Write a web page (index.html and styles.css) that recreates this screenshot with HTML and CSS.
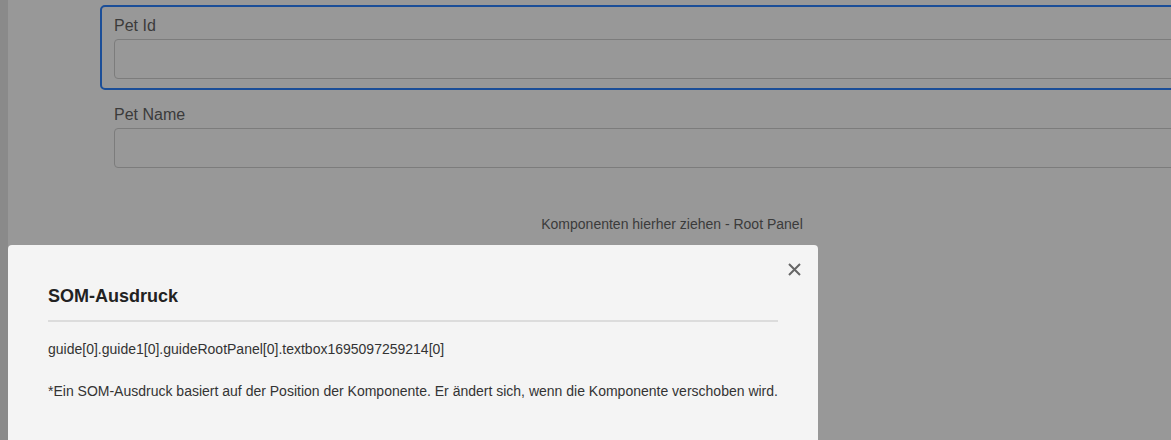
FILE: index.html
```html
<!DOCTYPE html>
<html lang="de">
<head>
<meta charset="utf-8">
<title>SOM-Ausdruck</title>
<link rel="stylesheet" href="styles.css">
</head>
<body>
<div class="app">
  <div class="strip"></div>
  <div class="canvas">
    <div class="field selected">
      <div class="label">Pet Id</div>
      <div class="input"></div>
    </div>
    <div class="field">
      <div class="label">Pet Name</div>
      <div class="input"></div>
    </div>
    <div class="dropzone">Komponenten hierher ziehen - Root Panel</div>
  </div>
</div>
<div class="modal">
  <button class="close" aria-label="Schließen">
    <svg width="13" height="13" viewBox="0 0 13 13"><path d="M1 1 L12 12 M12 1 L1 12" stroke="#666" stroke-width="2" fill="none"/></svg>
  </button>
  <h2 class="title">SOM-Ausdruck</h2>
  <div class="sep"></div>
  <p class="expr">guide[0].guide1[0].guideRootPanel[0].textbox1695097259214[0]</p>
  <p class="note">*Ein SOM-Ausdruck basiert auf der Position der Komponente. Er ändert sich, wenn die Komponente verschoben wird.</p>
</div>
</body>
</html>
```
FILE: styles.css
```css
html, body {
  margin: 0;
  height: 100%;
  overflow: hidden;
}
body {
  background: #989898;
  font-family: "Liberation Sans", Arial, sans-serif;
  color: #3b3b3b;
}
.app {
  display: flex;
  height: 440px;
}
.strip {
  width: 8px;
  flex: none;
  background: #8a8a8a;
}
.canvas {
  flex: 1;
  padding: 5px 0 0 92px;
  min-width: 0;
}
.field {
  width: 1144px;
  box-sizing: border-box;
  border: 2px solid transparent;
  border-radius: 5px;
  padding: 10px 0 9px 12px;
}
.field + .field {
  margin-top: 4px;
}
.field.selected {
  border-color: #1b4e98;
}
.label {
  font-size: 16px;
  line-height: 18px;
  color: #3b3b3b;
}
.input {
  margin-top: 4px;
  height: 40px;
  box-sizing: border-box;
  border: 1px solid #7c7c7c;
  border-radius: 4px;
}
.dropzone {
  width: 1144px;
  margin-top: 37px;
  text-align: center;
  font-size: 14px;
  line-height: 16px;
  color: #3b3b3b;
}
.modal {
  position: absolute;
  left: 8px;
  top: 245px;
  width: 810px;
  height: 220px;
  box-sizing: border-box;
  background: #f4f4f4;
  border-radius: 4px 4px 0 0;
  padding: 40px 40px 0 40px;
  color: #333;
}
.close {
  position: absolute;
  top: 18px;
  right: 17px;
  width: 13px;
  height: 13px;
  padding: 0;
  border: 0;
  background: none;
  display: block;
}
.close svg {
  display: block;
}
.title {
  margin: 0;
  font-size: 18px;
  line-height: 22px;
  font-weight: bold;
  color: #222;
}
.sep {
  margin-top: 13px;
  height: 2px;
  background: #dcdcdc;
}
.expr {
  margin: 17px 0 0 0;
  font-size: 14px;
  line-height: 20px;
  color: #333;
}
.note {
  margin: 22px 0 0 0;
  font-size: 14px;
  line-height: 20px;
  color: #333;
}
```
